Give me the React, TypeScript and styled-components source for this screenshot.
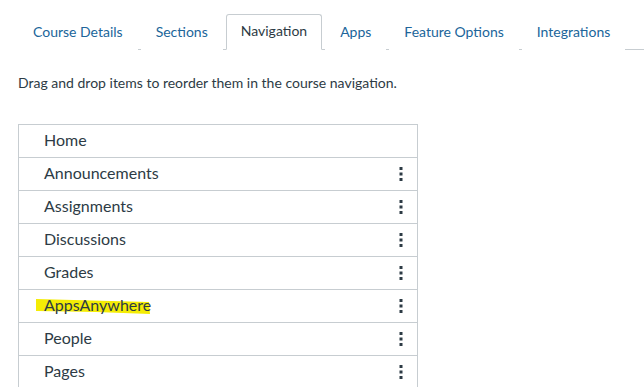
import styled, { createGlobalStyle } from "styled-components";

const GlobalStyle = createGlobalStyle`
  html, body {
    margin: 0;
    padding: 0;
    background: #ffffff;
  }
  body {
    font-family: Lato, "Open Sans", sans-serif;
    color: #2d3b45;
  }
`;

const tabs = [
  "Course Details",
  "Sections",
  "Navigation",
  "Apps",
  "Feature Options",
  "Integrations",
];

const items = [
  "Home",
  "Announcements",
  "Assignments",
  "Discussions",
  "Grades",
  "AppsAnywhere",
  "People",
  "Pages",
];

const KebabIcon = () => (
  <svg width="4" height="16" viewBox="0 0 4 16">
    <rect x="0.5" y="1" width="3" height="3" fill="#2d3b45" />
    <rect x="0.5" y="6.5" width="3" height="3" fill="#2d3b45" />
    <rect x="0.5" y="12" width="3" height="3" fill="#2d3b45" />
  </svg>
);

const Highlight = () => (
  <svg width="118" height="18" viewBox="0 0 118 18">
    <path d="M0 2 L113 5 L114 17 L60 15 L0 14 Z" fill="#f4ec05" />
  </svg>
);

const App = () => {
  return (
    <>
      <GlobalStyle />
      <Page>
        <TabBar>
          {tabs.map((tab) => (
            <Tab key={tab} $active={tab === "Navigation"}>
              {tab}
            </Tab>
          ))}
        </TabBar>
        <Description>
          Drag and drop items to reorder them in the course navigation.
        </Description>
        <NavList>
          {items.map((item, idx) => (
            <NavRow key={item}>
              <Label>
                {item === "AppsAnywhere" && (
                  <Marker>
                    <Highlight />
                  </Marker>
                )}
                <LabelText>{item}</LabelText>
              </Label>
              {idx > 0 && (
                <MenuButton>
                  <KebabIcon />
                </MenuButton>
              )}
            </NavRow>
          ))}
        </NavList>
      </Page>
    </>
  );
};

export default App;

const Page = styled.div`
  padding: 14px 0 0 18px;
  height: 387px;
  box-sizing: border-box;
  overflow: hidden;
`;

const TabBar = styled.div`
  display: flex;
  align-items: flex-end;
  border-bottom: 1px solid #c7cdd1;
  height: 36px;
  box-sizing: border-box;
`;

const Tab = styled.div<{ $active?: boolean }>`
  height: 36px;
  box-sizing: border-box;
  padding: 0 14px 3px;
  margin-right: 3px;
  display: flex;
  align-items: center;
  font-size: 14px;
  color: ${({ $active }) => ($active ? "#2d3b45" : "#20659a")};
  border: 1px solid ${({ $active }) => ($active ? "#c7cdd1" : "transparent")};
  border-bottom: ${({ $active }) => ($active ? "1px solid #ffffff" : "none")};
  border-radius: 3px 3px 0 0;
  margin-bottom: -1px;
  background: #ffffff;
`;

const Description = styled.p`
  margin: 23px 0 0 0;
  font-size: 14px;
  line-height: 20px;
  color: #2d3b45;
`;

const NavList = styled.div`
  margin-top: 31px;
  width: 400px;
  border: 1px solid #c7cdd1;
  box-sizing: border-box;
`;

const NavRow = styled.div`
  height: 33px;
  display: flex;
  align-items: center;
  justify-content: space-between;
  padding: 0 14px 3px 25px;
  border-top: 1px solid #c7cdd1;
  box-sizing: border-box;

  &:first-child {
    border-top: none;
    height: 32px;
  }
`;

const Label = styled.div`
  position: relative;
  font-size: 16px;
  color: #2d3b45;
`;

const LabelText = styled.span`
  position: relative;
`;

const Marker = styled.span`
  position: absolute;
  left: -8px;
  top: 2px;
  line-height: 0;
`;

const MenuButton = styled.div`
  display: flex;
  align-items: center;
  margin-top: 3px;
`;
